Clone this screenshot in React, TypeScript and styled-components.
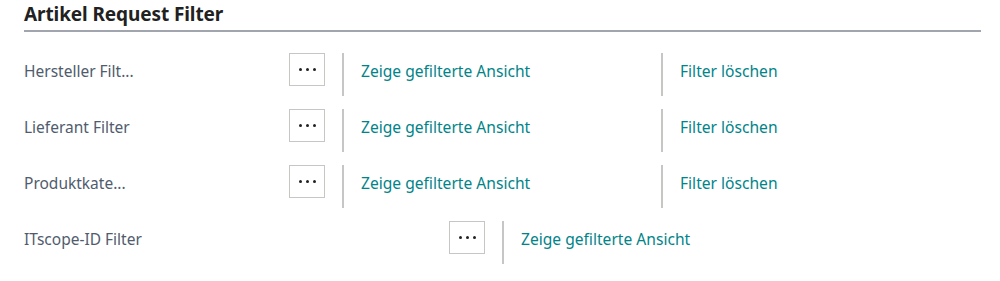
import React from "react";
import styled, { createGlobalStyle } from "styled-components";

const GlobalStyle = createGlobalStyle`
  body {
    margin: 0;
    background: #ffffff;
    font-family: "Noto Sans", "Open Sans", sans-serif;
  }
`;

type FilterRow = {
  label: string;
  labelWidth: number;
  canClear: boolean;
};

const rows: FilterRow[] = [
  { label: "Hersteller Filt...", labelWidth: 265, canClear: true },
  { label: "Lieferant Filter", labelWidth: 265, canClear: true },
  { label: "Produktkate...", labelWidth: 265, canClear: true },
  { label: "ITscope-ID Filter", labelWidth: 425, canClear: false },
];

export default function App() {
  return (
    <>
      <GlobalStyle />
      <Page>
        <Header>
          <Title>Artikel Request Filter</Title>
        </Header>
        <RowList>
          {rows.map((row) => (
            <Row key={row.label}>
              <Label $width={row.labelWidth}>{row.label}</Label>
              <DotsButton aria-label="Auswahl">
                <Dot />
                <Dot />
                <Dot />
              </DotsButton>
              <Action>
                <Link>Zeige gefilterte Ansicht</Link>
              </Action>
              {row.canClear && (
                <Action>
                  <Link>Filter löschen</Link>
                </Action>
              )}
            </Row>
          ))}
        </RowList>
      </Page>
    </>
  );
}

const Page = styled.div`
  padding: 0 19px 0 24px;
`;

const Header = styled.div`
  border-bottom: 2px solid #a0a5ae;
  height: 32px;
  box-sizing: border-box;
`;

const Title = styled.h1`
  margin: 0;
  font-size: 19px;
  line-height: 29px;
  font-weight: 700;
  color: #212121;
  letter-spacing: -0.1px;
`;

const RowList = styled.div`
  display: flex;
  flex-direction: column;
  padding-top: 21px;
`;

const Row = styled.div`
  display: flex;
  align-items: flex-start;
  height: 56px;
`;

const Label = styled.div<{ $width: number }>`
  width: ${(p) => p.$width}px;
  flex-shrink: 0;
  font-size: 15.5px;
  line-height: 37px;
  color: #505c6d;
`;

const DotsButton = styled.button`
  width: 36px;
  height: 33px;
  box-sizing: border-box;
  border: 1px solid #c8c6c4;
  background: #ffffff;
  display: flex;
  align-items: center;
  justify-content: center;
  gap: 4px;
  padding: 0;
  margin-right: 17px;
`;

const Dot = styled.span`
  width: 3px;
  height: 3px;
  border-radius: 50%;
  background: #212121;
`;

const Action = styled.div`
  width: 319px;
  height: 43px;
  box-sizing: border-box;
  border-left: 2px solid #c8c6c4;
  padding-left: 17px;
  flex-shrink: 0;
`;

const Link = styled.span`
  font-size: 15.6px;
  line-height: 37px;
  color: #008489;
  cursor: pointer;
`;
